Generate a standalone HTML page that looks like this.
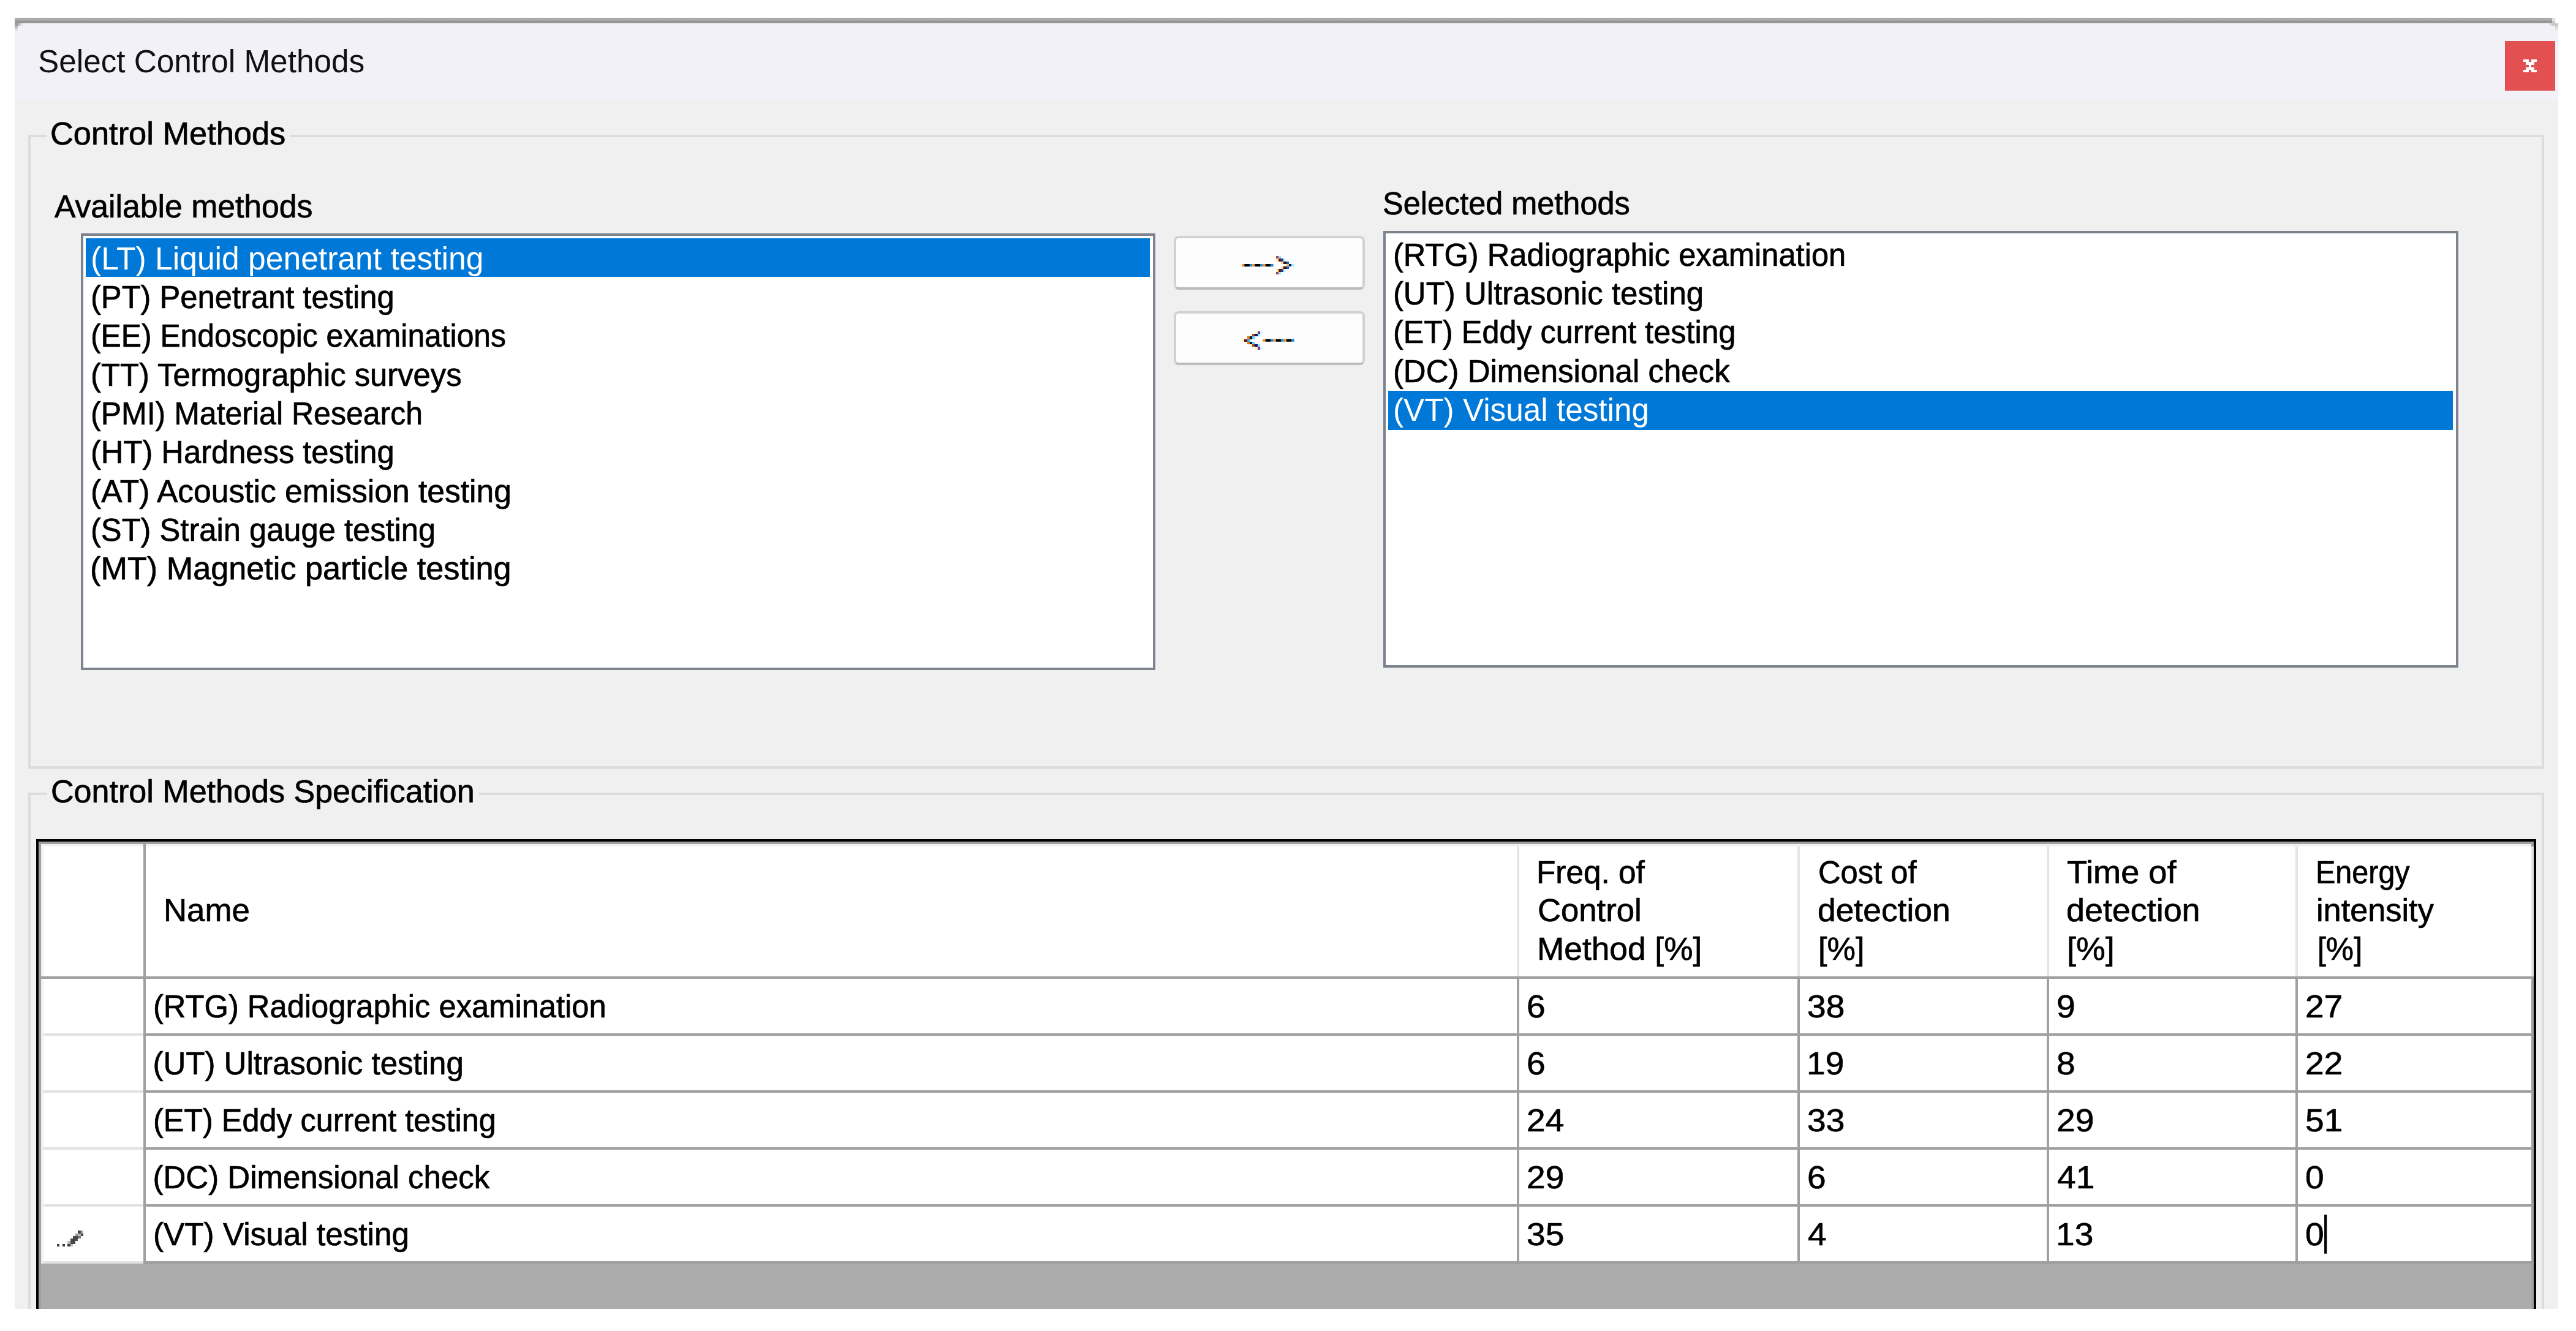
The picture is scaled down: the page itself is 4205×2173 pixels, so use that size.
<!DOCTYPE html>
<html>
<head>
<meta charset="utf-8">
<style>
html,body{margin:0;padding:0;}
body{width:4205px;height:2173px;background:#ffffff;position:relative;overflow:hidden;font-family:"Liberation Sans",sans-serif;color:#000;}
.a{position:absolute;}
.t{position:absolute;font-size:51px;line-height:63px;white-space:nowrap;color:#000;transform-origin:0 0;-webkit-text-stroke:0.7px currentColor;}
.gb{border:4px solid #dcdcdc;box-sizing:border-box;}
.lb{background:#fff;border:4px solid #7d838c;box-sizing:border-box;}
.sel{background:#0078d7;}
.btn{background:#fdfdfd;border:4px solid #d2d2d2;border-bottom-color:#bcbcbc;border-radius:8px;box-sizing:border-box;}
</style>
</head>
<body>
<div class="a" style="left:24px;top:29px;width:4152px;height:2108px;background:#f0f0f0;"></div>
<div class="a" style="left:24px;top:29px;width:4142px;height:9px;background:linear-gradient(#aaaaaa 0,#aeaeae 45%,#979797 55%,#969696 100%);"></div>
<div class="a" style="left:24px;top:38px;width:4152px;height:127px;background:#f2f1f7;"></div>
<div class="a" style="left:24px;top:38px;width:4.8px;height:4px;background:#999999;"></div>
<div class="a" style="left:28.8px;top:38px;width:4.2px;height:4px;background:#bbbbbd;"></div>
<div class="a" style="left:33px;top:38px;width:4px;height:4px;background:#dcdedf;"></div>
<div class="a" style="left:24px;top:42px;width:4.8px;height:4px;background:#bbbbbd;"></div>
<div class="a" style="left:24px;top:46px;width:4.8px;height:4px;background:#dadadc;"></div>
<div class="a" style="left:4166px;top:29px;width:5px;height:4.8px;background:#e2e2e2;"></div>
<div class="a" style="left:4166px;top:33.8px;width:5px;height:4.2px;background:#c8c8c8;"></div>
<div class="a" style="left:4171px;top:29px;width:5px;height:9px;background:#ffffff;"></div>
<div class="a" style="left:4162px;top:38px;width:4px;height:4px;background:#d8d8d8;"></div>
<div class="a" style="left:4166px;top:38px;width:5px;height:4px;background:#cbcbcb;"></div>
<div class="a" style="left:4171px;top:38px;width:4.8px;height:4px;background:#c9c9c9;"></div>
<div class="a" style="left:4171px;top:42px;width:4.8px;height:4px;background:#d6d6d6;"></div>
<div class="a" style="left:4171px;top:46px;width:4.8px;height:4px;background:#e6e6e8;"></div>
<div class="a" style="left:4089px;top:67px;width:82px;height:81px;background:#e25052;"></div>
<div class="a gb" style="left:46px;top:220px;width:4107px;height:1035px;"></div>
<div class="a" style="left:76px;top:210px;width:398px;height:20px;background:#f0f0f0;"></div>
<div class="a lb" style="left:132px;top:381px;width:1754px;height:713px;"></div>
<div class="a" style="left:140px;top:389px;width:1737px;height:63px;background:#0078d7;"></div>
<div class="a btn" style="left:1916px;top:385px;width:312px;height:88px;"></div>
<div class="a btn" style="left:1916px;top:508px;width:312px;height:88px;"></div>
<div class="a lb" style="left:2258px;top:377px;width:1755px;height:713px;"></div>
<div class="a" style="left:2266px;top:638px;width:1738px;height:64px;background:#0078d7;"></div>
<div class="a gb" style="left:46px;top:1294px;width:4107px;height:843px;border-bottom:none;"></div>
<div class="a" style="left:76px;top:1284px;width:706px;height:20px;background:#f0f0f0;"></div>
<div class="a" style="left:59px;top:1370px;width:4081px;height:767px;background:#000;"></div>
<div class="a" style="left:63px;top:1374px;width:4073px;height:763px;background:#a0a0a0;"></div>
<div class="a" style="left:67px;top:2064px;width:4065px;height:73px;background:#acacac;"></div>
<div class="a" style="left:67px;top:1378px;width:4065px;height:216px;background:#fff;"></div>
<div class="a" style="left:67px;top:1378px;width:4065px;height:4px;background:#f0f0f0;"></div>
<div class="a" style="left:67px;top:1378px;width:4px;height:216px;background:#f0f0f0;"></div>
<div class="a" style="left:2476px;top:1382px;width:4px;height:212px;background:#e5e5e5;"></div>
<div class="a" style="left:2934px;top:1382px;width:4px;height:212px;background:#e5e5e5;"></div>
<div class="a" style="left:3341px;top:1382px;width:4px;height:212px;background:#e5e5e5;"></div>
<div class="a" style="left:3747px;top:1382px;width:4px;height:212px;background:#e5e5e5;"></div>
<div class="a" style="left:4132px;top:1382px;width:4px;height:212px;background:#e5e5e5;"></div>
<div class="a" style="left:67px;top:1598px;width:4065px;height:89px;background:#fff;"></div>
<div class="a" style="left:67px;top:1598px;width:4px;height:93px;background:#f0f0f0;"></div>
<div class="a" style="left:71px;top:1687px;width:163px;height:4px;background:#e3e3e3;"></div>
<div class="a" style="left:67px;top:1691px;width:4065px;height:89px;background:#fff;"></div>
<div class="a" style="left:67px;top:1691px;width:4px;height:93px;background:#f0f0f0;"></div>
<div class="a" style="left:71px;top:1780px;width:163px;height:4px;background:#e3e3e3;"></div>
<div class="a" style="left:67px;top:1784px;width:4065px;height:89px;background:#fff;"></div>
<div class="a" style="left:67px;top:1784px;width:4px;height:93px;background:#f0f0f0;"></div>
<div class="a" style="left:71px;top:1873px;width:163px;height:4px;background:#e3e3e3;"></div>
<div class="a" style="left:67px;top:1877px;width:4065px;height:89px;background:#fff;"></div>
<div class="a" style="left:67px;top:1877px;width:4px;height:93px;background:#f0f0f0;"></div>
<div class="a" style="left:71px;top:1966px;width:163px;height:4px;background:#e3e3e3;"></div>
<div class="a" style="left:67px;top:1970px;width:4065px;height:89px;background:#fff;"></div>
<div class="a" style="left:67px;top:1970px;width:4px;height:93px;background:#f0f0f0;"></div>
<div class="a" style="left:71px;top:2059px;width:163px;height:4px;background:#e3e3e3;"></div>
<div class="a" style="left:2476px;top:1598px;width:4px;height:466px;background:#a0a0a0;"></div>
<div class="a" style="left:2934px;top:1598px;width:4px;height:466px;background:#a0a0a0;"></div>
<div class="a" style="left:3341px;top:1598px;width:4px;height:466px;background:#a0a0a0;"></div>
<div class="a" style="left:3747px;top:1598px;width:4px;height:466px;background:#a0a0a0;"></div>
<div class="a" style="left:234px;top:1378px;width:4px;height:686px;background:#a0a0a0;"></div>
<div class="t" style="left:62.0px;top:69.0px;transform:scaleX(1.0057);-webkit-text-stroke:0;color:#111;">Select Control Methods</div>
<div class="t" style="left:81.9px;top:187.0px;transform:scaleX(1.0270);">Control Methods</div>
<div class="t" style="left:88.5px;top:305.5px;transform:scaleX(1.0133);">Available methods</div>
<div class="t" style="left:2257.0px;top:301.0px;transform:scaleX(0.9889);">Selected methods</div>
<div class="t" style="left:83.0px;top:1261.0px;transform:scaleX(1.0208);">Control Methods Specification</div>
<div class="t" style="left:147.5px;top:390.7px;transform:scaleX(1.0115);color:#fff;-webkit-text-stroke:0;">(LT) Liquid penetrant testing</div>
<div class="t" style="left:147.5px;top:454.0px;transform:scaleX(0.9935);">(PT) Penetrant testing</div>
<div class="t" style="left:147.6px;top:517.3px;transform:scaleX(0.9761);">(EE) Endoscopic examinations</div>
<div class="t" style="left:147.5px;top:580.6px;transform:scaleX(0.9954);">(TT) Termographic surveys</div>
<div class="t" style="left:147.6px;top:643.9px;transform:scaleX(0.9808);">(PMI) Material Research</div>
<div class="t" style="left:147.5px;top:707.2px;transform:scaleX(0.9935);">(HT) Hardness testing</div>
<div class="t" style="left:147.5px;top:770.5px;transform:scaleX(1.0111);">(AT) Acoustic emission testing</div>
<div class="t" style="left:147.5px;top:833.8px;transform:scaleX(0.9934);">(ST) Strain gauge testing</div>
<div class="t" style="left:147.4px;top:897.1px;transform:scaleX(1.0237);">(MT) Magnetic particle testing</div>
<div class="t" style="left:2273.9px;top:384.7px;transform:scaleX(0.9928);">(RTG) Radiographic examination</div>
<div class="t" style="left:2273.9px;top:448.0px;">(UT) Ultrasonic testing</div>
<div class="t" style="left:2273.9px;top:511.3px;transform:scaleX(0.9872);">(ET) Eddy current testing</div>
<div class="t" style="left:2273.9px;top:574.6px;">(DC) Dimensional check</div>
<div class="t" style="left:2273.9px;top:637.9px;transform:scaleX(1.0056);color:#fff;-webkit-text-stroke:0;">(VT) Visual testing</div>
<div class="t" style="left:266.7px;top:1454.7px;transform:scaleX(1.0346);">Name</div>
<div class="t" style="left:2507.8px;top:1392.5px;transform:scaleX(1.0058);">Freq. of</div>
<div class="t" style="left:2509.7px;top:1455.4px;transform:scaleX(1.0327);">Control</div>
<div class="t" style="left:2509.4px;top:1518.3px;transform:scaleX(1.0438);">Method [%]</div>
<div class="t" style="left:2967.5px;top:1392.5px;transform:scaleX(0.9938);">Cost of</div>
<div class="t" style="left:2967.4px;top:1455.4px;transform:scaleX(1.0465);">detection</div>
<div class="t" style="left:2968.2px;top:1518.3px;transform:scaleX(1.0250);">[%]</div>
<div class="t" style="left:3373.9px;top:1392.5px;transform:scaleX(1.0613);">Time of</div>
<div class="t" style="left:3372.9px;top:1455.4px;transform:scaleX(1.0559);">detection</div>
<div class="t" style="left:3373.7px;top:1518.3px;transform:scaleX(1.0529);">[%]</div>
<div class="t" style="left:3780.2px;top:1392.5px;transform:scaleX(0.9506);">Energy</div>
<div class="t" style="left:3780.9px;top:1455.4px;transform:scaleX(1.0250);">intensity</div>
<div class="t" style="left:3782.7px;top:1518.3px;">[%]</div>
<div class="t" style="left:249.5px;top:1612.0px;transform:scaleX(0.9935);">(RTG) Radiographic examination</div>
<div class="t" style="left:249.5px;top:1705.1px;">(UT) Ultrasonic testing</div>
<div class="t" style="left:249.5px;top:1798.2px;transform:scaleX(0.9873);">(ET) Eddy current testing</div>
<div class="t" style="left:249.5px;top:1891.3px;">(DC) Dimensional check</div>
<div class="t" style="left:249.5px;top:1984.4px;transform:scaleX(1.0054);">(VT) Visual testing</div>
<div class="t" style="left:2492.1px;top:1612.0px;transform:scaleX(1.0800);">6</div>
<div class="t" style="left:2949.8px;top:1612.0px;transform:scaleX(1.0800);">38</div>
<div class="t" style="left:3357.2px;top:1612.0px;transform:scaleX(1.0800);">9</div>
<div class="t" style="left:3762.5px;top:1612.0px;transform:scaleX(1.0800);">27</div>
<div class="t" style="left:2492.1px;top:1705.1px;transform:scaleX(1.0800);">6</div>
<div class="t" style="left:2948.8px;top:1705.1px;transform:scaleX(1.0800);">19</div>
<div class="t" style="left:3357.2px;top:1705.1px;transform:scaleX(1.0800);">8</div>
<div class="t" style="left:3762.5px;top:1705.1px;transform:scaleX(1.0800);">22</div>
<div class="t" style="left:2492.1px;top:1798.2px;transform:scaleX(1.0800);">24</div>
<div class="t" style="left:2949.8px;top:1798.2px;transform:scaleX(1.0800);">33</div>
<div class="t" style="left:3357.2px;top:1798.2px;transform:scaleX(1.0800);">29</div>
<div class="t" style="left:3762.5px;top:1798.2px;transform:scaleX(1.0800);">51</div>
<div class="t" style="left:2492.1px;top:1891.3px;transform:scaleX(1.0800);">29</div>
<div class="t" style="left:2949.8px;top:1891.3px;transform:scaleX(1.0800);">6</div>
<div class="t" style="left:3358.3px;top:1891.3px;transform:scaleX(1.0800);">41</div>
<div class="t" style="left:3762.5px;top:1891.3px;transform:scaleX(1.0800);">0</div>
<div class="t" style="left:2492.1px;top:1984.4px;transform:scaleX(1.0800);">35</div>
<div class="t" style="left:2950.9px;top:1984.4px;transform:scaleX(1.0800);">4</div>
<div class="t" style="left:3356.2px;top:1984.4px;transform:scaleX(1.0800);">13</div>
<div class="t" style="left:3762.5px;top:1984.4px;transform:scaleX(1.0800);">0</div>
<svg class="a" style="left:0;top:0;" width="4205" height="2173" viewBox="0 0 4205 2173">
<g fill="#fff" shape-rendering="crispEdges"><rect x="4119.1" y="97.0" width="4.3" height="4.2"/><rect x="4123.4" y="97.0" width="4.7" height="4.2"/><rect x="4132.0" y="97.0" width="4.7" height="4.2"/><rect x="4136.7" y="97.0" width="4.3" height="4.2"/><rect x="4123.4" y="101.2" width="4.7" height="4.3"/><rect x="4128.1" y="101.2" width="3.9" height="4.3"/><rect x="4132.0" y="101.2" width="4.7" height="4.3"/><rect x="4128.1" y="105.5" width="3.9" height="4.1"/><rect x="4123.4" y="109.6" width="4.7" height="4.3"/><rect x="4128.1" y="109.6" width="3.9" height="4.3"/><rect x="4132.0" y="109.6" width="4.7" height="4.3"/><rect x="4119.1" y="113.9" width="4.3" height="4.2"/><rect x="4123.4" y="113.9" width="4.7" height="4.2"/><rect x="4132.0" y="113.9" width="4.7" height="4.2"/><rect x="4136.7" y="113.9" width="4.3" height="4.2"/></g>
<rect x="2027.0" y="431" width="4.3" height="4.2" fill="#f0922e"/><rect x="2031.3" y="431" width="8.6" height="4.2" fill="#000"/><rect x="2039.9" y="431" width="4.3" height="4.2" fill="#168ee0"/><rect x="2044.1" y="431" width="4.3" height="4.2" fill="#f0922e"/><rect x="2048.4" y="431" width="8.6" height="4.2" fill="#000"/><rect x="2057.0" y="431" width="4.3" height="4.2" fill="#168ee0"/><rect x="2061.4" y="431" width="4.3" height="4.2" fill="#f0922e"/><rect x="2065.7" y="431" width="8.6" height="4.2" fill="#000"/><rect x="2074.3" y="431" width="4.3" height="4.2" fill="#168ee0"/>
<rect x="2061.4" y="553.6" width="4.3" height="4.2" fill="#f0922e"/><rect x="2065.7" y="553.6" width="8.6" height="4.2" fill="#000"/><rect x="2074.3" y="553.6" width="4.3" height="4.2" fill="#168ee0"/><rect x="2078.5" y="553.6" width="4.3" height="4.2" fill="#f0922e"/><rect x="2082.8" y="553.6" width="8.6" height="4.2" fill="#000"/><rect x="2091.4" y="553.6" width="4.3" height="4.2" fill="#168ee0"/><rect x="2095.6" y="553.6" width="4.3" height="4.2" fill="#f0922e"/><rect x="2099.9" y="553.6" width="8.6" height="4.2" fill="#000"/><rect x="2108.5" y="553.6" width="4.3" height="4.2" fill="#168ee0"/>
<g shape-rendering="crispEdges"><rect x="2078.3" y="418.1" width="4.5" height="4.2" fill="#fffbd8"/><rect x="2082.8" y="418.1" width="4.2" height="4.2" fill="#a8386c"/><rect x="2087" y="418.1" width="4.2" height="4.2" fill="#8ff0f4"/><rect x="2082.8" y="422.3" width="4.2" height="4.5" fill="#fdf5a8"/><rect x="2087" y="422.3" width="4.2" height="4.5" fill="#7a0a0a"/><rect x="2091.2" y="422.3" width="4.2" height="4.5" fill="#0a48a8"/><rect x="2095.4" y="422.3" width="4.2" height="4.5" fill="#d8f8f8"/><rect x="2091.2" y="426.8" width="4.2" height="4.2" fill="#fcd894"/><rect x="2095.4" y="426.8" width="4.2" height="4.2" fill="#400808"/><rect x="2099.6" y="426.8" width="4.2" height="4.2" fill="#0868c0"/><rect x="2099.6" y="431" width="4.2" height="4.0" fill="#f8b860"/><rect x="2103.8" y="431" width="4.2" height="4.0" fill="#080870"/><rect x="2108" y="431" width="4.5" height="4.0" fill="#98f8f8"/><rect x="2091.2" y="435" width="4.2" height="4.4" fill="#fcd894"/><rect x="2095.4" y="435" width="4.2" height="4.4" fill="#400808"/><rect x="2099.6" y="435" width="4.2" height="4.4" fill="#0868c0"/><rect x="2082.8" y="439.4" width="4.2" height="4.2" fill="#fdf5a8"/><rect x="2087" y="439.4" width="4.2" height="4.2" fill="#7a0a0a"/><rect x="2091.2" y="439.4" width="4.2" height="4.2" fill="#0a48a8"/><rect x="2095.4" y="439.4" width="4.2" height="4.2" fill="#d8f8f8"/><rect x="2078.3" y="443.6" width="4.5" height="4.2" fill="#fffbd8"/><rect x="2082.8" y="443.6" width="4.2" height="4.2" fill="#a8386c"/><rect x="2087" y="443.6" width="4.2" height="4.2" fill="#8ff0f4"/></g>
<g shape-rendering="crispEdges"><rect x="2048.6" y="541" width="4.2" height="4.2" fill="#fdf8b0"/><rect x="2052.8" y="541" width="4.2" height="4.2" fill="#7838a0"/><rect x="2057" y="541" width="4.0" height="4.2" fill="#c8f8f8"/><rect x="2040" y="545.2" width="4.2" height="4.2" fill="#fdfad8"/><rect x="2044.2" y="545.2" width="4.2" height="4.2" fill="#b84810"/><rect x="2048.4" y="545.2" width="4.4" height="4.2" fill="#080878"/><rect x="2052.8" y="545.2" width="4.2" height="4.2" fill="#88f0f8"/><rect x="2035.8" y="549.4" width="4.2" height="4.2" fill="#e07810"/><rect x="2040" y="549.4" width="4.2" height="4.2" fill="#080838"/><rect x="2044.2" y="549.4" width="4.2" height="4.2" fill="#58d0f8"/><rect x="2027" y="553.6" width="4.3" height="4.3" fill="#fdf8b8"/><rect x="2031.3" y="553.6" width="4.5" height="4.3" fill="#800808"/><rect x="2035.8" y="553.6" width="4.2" height="4.3" fill="#10b8f8"/><rect x="2035.8" y="557.9" width="4.2" height="4.2" fill="#e07810"/><rect x="2040" y="557.9" width="4.2" height="4.2" fill="#080838"/><rect x="2044.2" y="557.9" width="4.2" height="4.2" fill="#58d0f8"/><rect x="2040" y="562.1" width="4.2" height="4.2" fill="#fdfad8"/><rect x="2044.2" y="562.1" width="4.2" height="4.2" fill="#b84810"/><rect x="2048.4" y="562.1" width="4.4" height="4.2" fill="#080878"/><rect x="2052.8" y="562.1" width="4.2" height="4.2" fill="#88f0f8"/><rect x="2048.6" y="566.3" width="4.2" height="4.2" fill="#fdf8b0"/><rect x="2052.8" y="566.3" width="4.2" height="4.2" fill="#7838a0"/><rect x="2057" y="566.3" width="4.0" height="4.2" fill="#c8f8f8"/></g>
<g shape-rendering="crispEdges"><rect x="127.4" y="2009.2" width="4.3" height="4.3" fill="#444"/><rect x="131.7" y="2009.2" width="4.3" height="4.3" fill="#aaa"/><rect x="123.1" y="2013.5" width="4.3" height="4.3" fill="#999"/><rect x="127.4" y="2013.5" width="4.3" height="4.3" fill="#bbb"/><rect x="131.7" y="2013.5" width="4.3" height="4.3" fill="#444"/><rect x="118.8" y="2017.8" width="4.3" height="4.3" fill="#4a4a4a"/><rect x="123.1" y="2017.8" width="4.3" height="4.3" fill="#444"/><rect x="127.4" y="2017.8" width="4.3" height="4.3" fill="#777"/><rect x="114.5" y="2022.1" width="4.3" height="4.3" fill="#4a4a4a"/><rect x="118.8" y="2022.1" width="4.3" height="4.3" fill="#444"/><rect x="123.1" y="2022.1" width="4.3" height="4.3" fill="#505050"/><rect x="110.2" y="2026.4" width="4.3" height="4.3" fill="#bbb"/><rect x="114.5" y="2026.4" width="4.3" height="4.3" fill="#484848"/><rect x="118.8" y="2026.4" width="4.3" height="4.3" fill="#484848"/><rect x="93.0" y="2030.7" width="4.3" height="4.3" fill="#3a3a3a"/><rect x="101.6" y="2030.7" width="4.3" height="4.3" fill="#3a3a3a"/><rect x="110.2" y="2030.7" width="4.3" height="4.3" fill="#3a3a3a"/><rect x="114.5" y="2030.7" width="4.3" height="4.3" fill="#bbb"/></g>
<rect x="3794.1" y="1983" width="4.2" height="63.7" fill="#000"/>
</svg>
</body>
</html>
